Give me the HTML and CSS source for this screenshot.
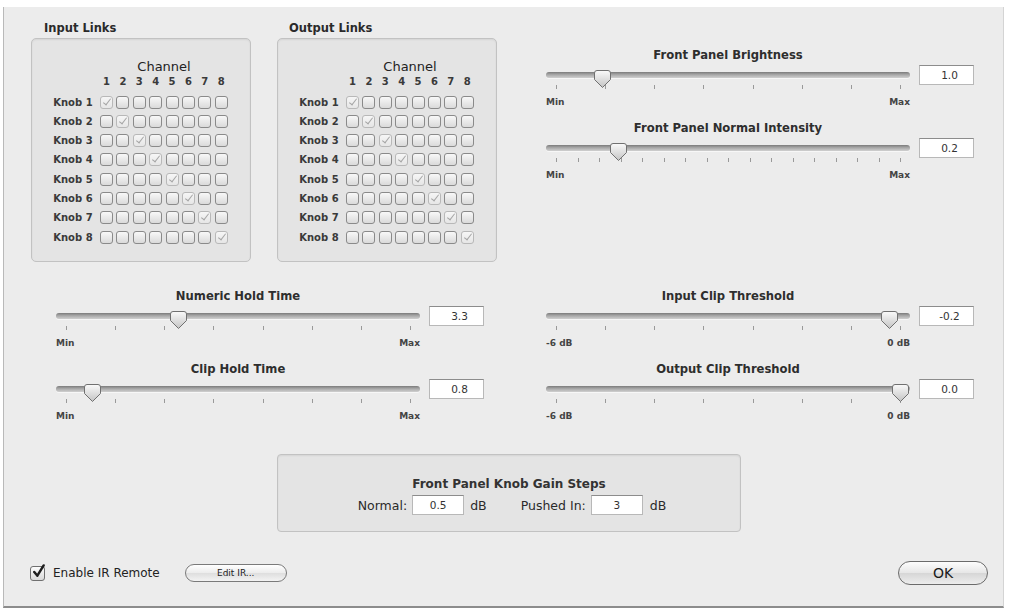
FILE: index.html
```html
<!DOCTYPE html>
<html>
<head>
<meta charset="utf-8">
<link rel="stylesheet" href="styles.css">
</head>
<body>
<div class="window">
  <div class="top">
    <div class="group">
      <div class="group-label">Input Links</div>
      <div class="group-box">
        <div class="ch-title">Channel</div>
        <div class="mrow nums"><span></span><span>1</span><span>2</span><span>3</span><span>4</span><span>5</span><span>6</span><span>7</span><span>8</span></div>
        <div class="mrow first"><span class="knob">Knob 1</span><i class="cb on"></i><i class="cb"></i><i class="cb"></i><i class="cb"></i><i class="cb"></i><i class="cb"></i><i class="cb"></i><i class="cb"></i></div>
        <div class="mrow"><span class="knob">Knob 2</span><i class="cb"></i><i class="cb on"></i><i class="cb"></i><i class="cb"></i><i class="cb"></i><i class="cb"></i><i class="cb"></i><i class="cb"></i></div>
        <div class="mrow"><span class="knob">Knob 3</span><i class="cb"></i><i class="cb"></i><i class="cb on"></i><i class="cb"></i><i class="cb"></i><i class="cb"></i><i class="cb"></i><i class="cb"></i></div>
        <div class="mrow"><span class="knob">Knob 4</span><i class="cb"></i><i class="cb"></i><i class="cb"></i><i class="cb on"></i><i class="cb"></i><i class="cb"></i><i class="cb"></i><i class="cb"></i></div>
        <div class="mrow"><span class="knob">Knob 5</span><i class="cb"></i><i class="cb"></i><i class="cb"></i><i class="cb"></i><i class="cb on"></i><i class="cb"></i><i class="cb"></i><i class="cb"></i></div>
        <div class="mrow"><span class="knob">Knob 6</span><i class="cb"></i><i class="cb"></i><i class="cb"></i><i class="cb"></i><i class="cb"></i><i class="cb on"></i><i class="cb"></i><i class="cb"></i></div>
        <div class="mrow"><span class="knob">Knob 7</span><i class="cb"></i><i class="cb"></i><i class="cb"></i><i class="cb"></i><i class="cb"></i><i class="cb"></i><i class="cb on"></i><i class="cb"></i></div>
        <div class="mrow"><span class="knob">Knob 8</span><i class="cb"></i><i class="cb"></i><i class="cb"></i><i class="cb"></i><i class="cb"></i><i class="cb"></i><i class="cb"></i><i class="cb on"></i></div>
      </div>
    </div>
    <div class="group out">
      <div class="group-label">Output Links</div>
      <div class="group-box">
        <div class="ch-title">Channel</div>
        <div class="mrow nums"><span></span><span>1</span><span>2</span><span>3</span><span>4</span><span>5</span><span>6</span><span>7</span><span>8</span></div>
        <div class="mrow first"><span class="knob">Knob 1</span><i class="cb on"></i><i class="cb"></i><i class="cb"></i><i class="cb"></i><i class="cb"></i><i class="cb"></i><i class="cb"></i><i class="cb"></i></div>
        <div class="mrow"><span class="knob">Knob 2</span><i class="cb"></i><i class="cb on"></i><i class="cb"></i><i class="cb"></i><i class="cb"></i><i class="cb"></i><i class="cb"></i><i class="cb"></i></div>
        <div class="mrow"><span class="knob">Knob 3</span><i class="cb"></i><i class="cb"></i><i class="cb on"></i><i class="cb"></i><i class="cb"></i><i class="cb"></i><i class="cb"></i><i class="cb"></i></div>
        <div class="mrow"><span class="knob">Knob 4</span><i class="cb"></i><i class="cb"></i><i class="cb"></i><i class="cb on"></i><i class="cb"></i><i class="cb"></i><i class="cb"></i><i class="cb"></i></div>
        <div class="mrow"><span class="knob">Knob 5</span><i class="cb"></i><i class="cb"></i><i class="cb"></i><i class="cb"></i><i class="cb on"></i><i class="cb"></i><i class="cb"></i><i class="cb"></i></div>
        <div class="mrow"><span class="knob">Knob 6</span><i class="cb"></i><i class="cb"></i><i class="cb"></i><i class="cb"></i><i class="cb"></i><i class="cb on"></i><i class="cb"></i><i class="cb"></i></div>
        <div class="mrow"><span class="knob">Knob 7</span><i class="cb"></i><i class="cb"></i><i class="cb"></i><i class="cb"></i><i class="cb"></i><i class="cb"></i><i class="cb on"></i><i class="cb"></i></div>
        <div class="mrow"><span class="knob">Knob 8</span><i class="cb"></i><i class="cb"></i><i class="cb"></i><i class="cb"></i><i class="cb"></i><i class="cb"></i><i class="cb"></i><i class="cb on"></i></div>
      </div>
    </div>
    <div class="right-col">
      <div class="sl">
        <div class="sl-title">Front Panel Brightness</div>
        <div class="sl-row">
          <div class="slider"><div class="track"></div>
            <svg class="thumb" style="left:48px" viewBox="0 0 17 18"><defs><linearGradient id="g1" x1="0" y1="0" x2="0" y2="1"><stop offset="0" stop-color="#fafafa"/><stop offset="1" stop-color="#c4c4c4"/></linearGradient></defs><path d="M3 0.5H14Q16.5 0.5 16.5 3V9.5L8.5 17.5L0.5 9.5V3Q0.5 0.5 3 0.5Z" fill="url(#g1)" stroke="#707070"/></svg>
          </div>
          <div class="val">1.0</div>
        </div>
        <div class="ticks"><i></i><i></i><i></i><i></i><i></i><i></i><i></i><i></i></div>
        <div class="sl-labels"><span>Min</span><span>Max</span></div>
      </div>
      <div class="sl">
        <div class="sl-title">Front Panel Normal Intensity</div>
        <div class="sl-row">
          <div class="slider"><div class="track"></div>
            <svg class="thumb" style="left:64px" viewBox="0 0 17 18"><defs><linearGradient id="g2" x1="0" y1="0" x2="0" y2="1"><stop offset="0" stop-color="#fafafa"/><stop offset="1" stop-color="#c4c4c4"/></linearGradient></defs><path d="M3 0.5H14Q16.5 0.5 16.5 3V9.5L8.5 17.5L0.5 9.5V3Q0.5 0.5 3 0.5Z" fill="url(#g2)" stroke="#707070"/></svg>
          </div>
          <div class="val">0.2</div>
        </div>
        <div class="ticks"><i></i><i></i><i></i><i></i><i></i><i></i><i></i><i></i><i></i><i></i><i></i><i></i><i></i><i></i><i></i><i></i><i></i></div>
        <div class="sl-labels"><span>Min</span><span>Max</span></div>
      </div>
    </div>
  </div>

  <div class="middle">
    <div class="col">
      <div class="sl">
        <div class="sl-title">Numeric Hold Time</div>
        <div class="sl-row">
          <div class="slider"><div class="track"></div>
            <svg class="thumb" style="left:114px" viewBox="0 0 17 18"><defs><linearGradient id="g3" x1="0" y1="0" x2="0" y2="1"><stop offset="0" stop-color="#fafafa"/><stop offset="1" stop-color="#c4c4c4"/></linearGradient></defs><path d="M3 0.5H14Q16.5 0.5 16.5 3V9.5L8.5 17.5L0.5 9.5V3Q0.5 0.5 3 0.5Z" fill="url(#g3)" stroke="#707070"/></svg>
          </div>
          <div class="val">3.3</div>
        </div>
        <div class="ticks"><i></i><i></i><i></i><i></i><i></i><i></i><i></i><i></i></div>
        <div class="sl-labels"><span>Min</span><span>Max</span></div>
      </div>
      <div class="sl">
        <div class="sl-title">Clip Hold Time</div>
        <div class="sl-row">
          <div class="slider"><div class="track"></div>
            <svg class="thumb" style="left:28px" viewBox="0 0 17 18"><defs><linearGradient id="g4" x1="0" y1="0" x2="0" y2="1"><stop offset="0" stop-color="#fafafa"/><stop offset="1" stop-color="#c4c4c4"/></linearGradient></defs><path d="M3 0.5H14Q16.5 0.5 16.5 3V9.5L8.5 17.5L0.5 9.5V3Q0.5 0.5 3 0.5Z" fill="url(#g4)" stroke="#707070"/></svg>
          </div>
          <div class="val">0.8</div>
        </div>
        <div class="ticks"><i></i><i></i><i></i><i></i><i></i><i></i><i></i><i></i></div>
        <div class="sl-labels"><span>Min</span><span>Max</span></div>
      </div>
    </div>
    <div class="col right">
      <div class="sl">
        <div class="sl-title">Input Clip Threshold</div>
        <div class="sl-row">
          <div class="slider"><div class="track"></div>
            <svg class="thumb" style="left:335px" viewBox="0 0 17 18"><defs><linearGradient id="g5" x1="0" y1="0" x2="0" y2="1"><stop offset="0" stop-color="#fafafa"/><stop offset="1" stop-color="#c4c4c4"/></linearGradient></defs><path d="M3 0.5H14Q16.5 0.5 16.5 3V9.5L8.5 17.5L0.5 9.5V3Q0.5 0.5 3 0.5Z" fill="url(#g5)" stroke="#707070"/></svg>
          </div>
          <div class="val">-0.2</div>
        </div>
        <div class="ticks"><i></i><i></i><i></i><i></i><i></i><i></i><i></i><i></i></div>
        <div class="sl-labels"><span>-6 dB</span><span>0 dB</span></div>
      </div>
      <div class="sl">
        <div class="sl-title">Output Clip Threshold</div>
        <div class="sl-row">
          <div class="slider"><div class="track"></div>
            <svg class="thumb" style="left:346px" viewBox="0 0 17 18"><defs><linearGradient id="g6" x1="0" y1="0" x2="0" y2="1"><stop offset="0" stop-color="#fafafa"/><stop offset="1" stop-color="#c4c4c4"/></linearGradient></defs><path d="M3 0.5H14Q16.5 0.5 16.5 3V9.5L8.5 17.5L0.5 9.5V3Q0.5 0.5 3 0.5Z" fill="url(#g6)" stroke="#707070"/></svg>
          </div>
          <div class="val">0.0</div>
        </div>
        <div class="ticks"><i></i><i></i><i></i><i></i><i></i><i></i><i></i><i></i></div>
        <div class="sl-labels"><span>-6 dB</span><span>0 dB</span></div>
      </div>
    </div>
  </div>

  <div class="gain">
    <div class="gain-title">Front Panel Knob Gain Steps</div>
    <div class="gain-row">
      <span>Normal:</span><span class="gval g-a">0.5</span><span class="unit-a">dB</span>
      <span class="pushed">Pushed In:</span><span class="gval g-b">3</span><span class="unit-b">dB</span>
    </div>
  </div>

  <div class="bottom">
    <span class="chk"><svg class="chk-mark" viewBox="0 0 16 16"><path d="M3.5 8.5L6.8 12.5L13.5 1.5" fill="none" stroke="#1e1e1e" stroke-width="2.6" stroke-linecap="round" stroke-linejoin="round"/></svg></span>
    <span class="chk-label">Enable IR Remote</span>
    <button class="btn-edit">Edit IR...</button>
    <button class="btn-ok">OK</button>
  </div>
</div>
</body>
</html>
```

FILE: styles.css
```css
body {
  margin: 0;
  background: #ffffff;
  font-family: "DejaVu Sans", "Liberation Sans", sans-serif;
  color: #2a2a2a;
}

.window {
  box-sizing: border-box;
  width: 1001px;
  height: 601px;
  margin: 7px 0 0 3px;
  background: #ececec;
  border-left: 1px solid #b9b9b9;
  border-right: 1px solid #d4d4d4;
  border-bottom: 2px solid #8c8c8c;
  padding: 14px 0 0 27px;
}

/* ---------- top ---------- */
.top {
  display: flex;
  align-items: flex-start;
}

.group {
  width: 220px;
}

.group.out {
  margin-left: 26px;
}

.group-label {
  font-size: 11.5px;
  font-weight: bold;
  line-height: 14px;
  padding-left: 13px;
  margin-bottom: 3px;
  color: #2a2a2a;
}

.group.out .group-label {
  padding-left: 12px;
}

.group-box {
  box-sizing: border-box;
  height: 224px;
  border: 1px solid #c2c2c2;
  border-radius: 5px;
  background: #e4e4e4;
  padding-top: 20px;
  box-shadow: inset 0 1px 2px rgba(0, 0, 0, 0.07);
}

.ch-title {
  margin-left: 68px;
  width: 128px;
  text-align: center;
  font-size: 13px;
  line-height: 16px;
  color: #222;
}

.mrow {
  display: grid;
  grid-template-columns: 64.6px repeat(8, 13px);
  column-gap: 3.4px;
  height: 13px;
  margin-top: 6.3px;
}

.mrow.first {
  margin-top: 7.5px;
}

.mrow.nums {
  height: 12px;
  margin-top: 1px;
  font-size: 10px;
  font-weight: bold;
  line-height: 12px;
  text-align: center;
  color: #3a3a3a;
}

.knob {
  font-size: 10px;
  font-weight: bold;
  line-height: 13px;
  text-align: right;
  padding-right: 4px;
  color: #3a3a3a;
  white-space: nowrap;
}

.cb {
  position: relative;
  box-sizing: border-box;
  width: 13px;
  height: 13px;
  border: 1px solid #8a8a8a;
  border-radius: 3px;
  background: linear-gradient(#f8f8f8, #dadada);
}

.cb.on {
  border-color: #b8b8b8;
  background: linear-gradient(#f6f6f6, #e6e6e6);
}

.cb.on::after {
  content: "";
  position: absolute;
  left: 4px;
  top: 0px;
  width: 3px;
  height: 7px;
  border: solid #a6a6a6;
  border-width: 0 1.5px 1.5px 0;
  transform: rotate(38deg);
}

/* ---------- sliders ---------- */
.right-col {
  margin-left: 49px;
  margin-top: 27px;
}

.sl + .sl {
  margin-top: 13px;
}

.sl-title {
  width: 364px;
  text-align: center;
  font-size: 11.6px;
  font-weight: bold;
  line-height: 14px;
  color: #2e2e2e;
}

.sl-row {
  display: flex;
  gap: 9px;
  margin-top: 3px;
  height: 20px;
}

.slider {
  position: relative;
  width: 364px;
  height: 20px;
}

.track {
  margin-top: 7px;
  height: 6px;
  border-radius: 3px;
  background: linear-gradient(#7b7b7b, #a8a8a8 45%, #d0d0d0);
  box-shadow: 0 1px 0 rgba(255, 255, 255, 0.6);
}

.thumb {
  position: absolute;
  top: 5px;
  width: 17px;
  height: 18px;
}

.val {
  box-sizing: border-box;
  width: 55px;
  height: 20px;
  background: #ffffff;
  border: 1px solid #b8b8b8;
  border-top-color: #8c8c8c;
  font-size: 10.5px;
  line-height: 18px;
  text-align: center;
  padding-left: 6px;
  color: #333;
}

.ticks {
  box-sizing: border-box;
  width: 364px;
  height: 5px;
  display: flex;
  justify-content: space-between;
  padding: 0 9px 0 10px;
}

.ticks i {
  width: 1px;
  height: 4px;
  background: #999999;
}

.sl-labels {
  width: 364px;
  display: flex;
  justify-content: space-between;
  margin-top: 6px;
  font-size: 9px;
  font-weight: bold;
  line-height: 12px;
  color: #444;
}

.middle {
  display: flex;
  margin-top: 27px;
  padding-left: 25px;
}

.col.right {
  margin-left: 62px;
}

/* ---------- gain box ---------- */
.gain {
  box-sizing: border-box;
  width: 464px;
  height: 78px;
  margin: 32px 0 0 246px;
  border: 1px solid #c2c2c2;
  border-radius: 4px;
  background: #e4e4e4;
  padding-top: 21px;
  box-shadow: inset 0 1px 2px rgba(0, 0, 0, 0.07);
}

.gain-title {
  text-align: center;
  font-size: 12px;
  font-weight: bold;
  line-height: 16px;
  color: #333;
}

.gain-row {
  display: flex;
  justify-content: center;
  align-items: center;
  height: 20px;
  margin-top: 3px;
  padding-left: 6px;
  font-size: 12.5px;
  color: #2a2a2a;
}

.gval {
  box-sizing: border-box;
  width: 52px;
  height: 20px;
  background: #fff;
  border: 1px solid #b8b8b8;
  border-top-color: #8c8c8c;
  font-size: 10.5px;
  line-height: 18px;
  text-align: center;
  color: #333;
}

.g-a { margin-left: 5px; }
.unit-a { margin-left: 6px; }
.pushed { margin-left: 34px; }
.g-b { margin-left: 5px; }
.unit-b { margin-left: 7px; }

/* ---------- bottom ---------- */
.bottom {
  display: flex;
  align-items: center;
  height: 24px;
  margin-top: 29px;
  margin-left: -1px;
}

.chk {
  position: relative;
  box-sizing: border-box;
  width: 15px;
  height: 15px;
  border: 1px solid #707070;
  border-radius: 3px;
  background: linear-gradient(#fdfdfd, #d9d9d9);
}

.chk-mark {
  position: absolute;
  left: 0px;
  top: -3px;
  width: 15px;
  height: 15px;
}

.chk-label {
  margin-left: 8px;
  font-size: 12px;
  color: #222;
}

.btn-edit {
  margin-left: 25px;
  width: 102px;
  height: 18px;
  border-radius: 9px;
  border: 1px solid #7a7a7a;
  background: linear-gradient(#ffffff, #ececec 50%, #dedede 51%, #f3f3f3);
  font-family: inherit;
  font-size: 9px;
  color: #222;
  padding: 0;
}

.btn-ok {
  margin-left: auto;
  margin-right: 15px;
  width: 90px;
  height: 24px;
  border-radius: 12px;
  border: 1px solid #6b6b6b;
  background: linear-gradient(#fdfdfd, #e6e6e6 50%, #d6d6d6 51%, #ededed);
  font-family: inherit;
  font-size: 14px;
  color: #1a1a1a;
  padding: 0;
}
```
